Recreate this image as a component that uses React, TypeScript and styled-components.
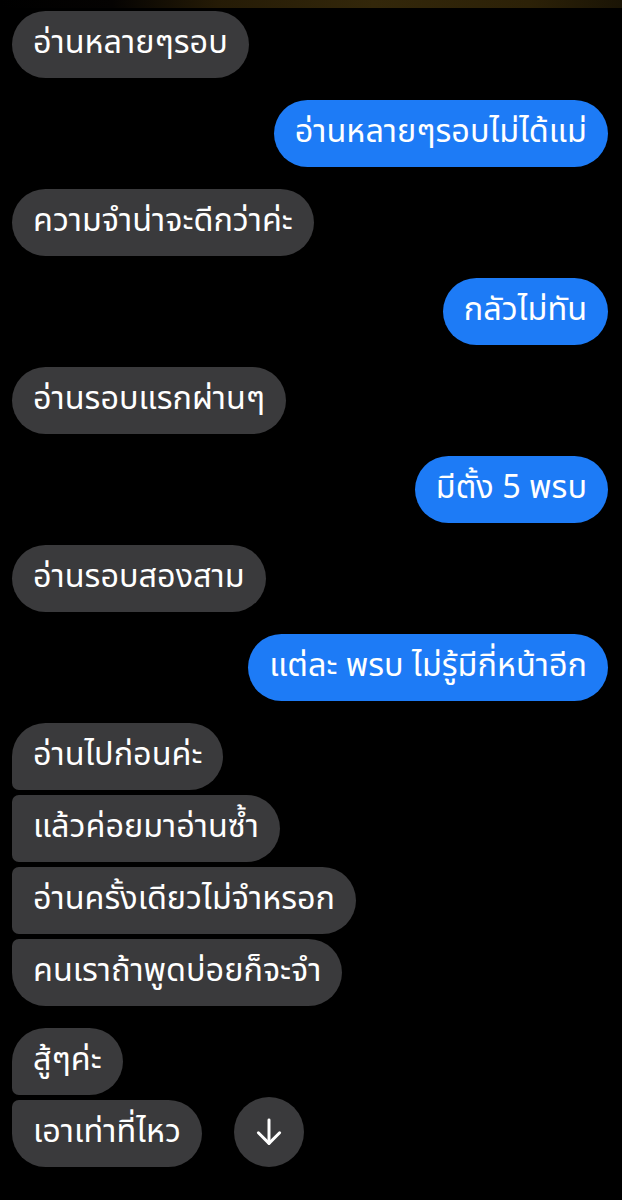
import React from "react";
import styled, { createGlobalStyle, css } from "styled-components";

const Global = createGlobalStyle`
  html, body { margin: 0; padding: 0; background: #000; }
  body { font-family: "Noto Sans Thai", "Noto Sans", "DejaVu Sans", sans-serif; }
`;

const Page = styled.div`
  width: 622px;
  min-height: 1200px;
  background: #000;
  overflow: hidden;
`;

const TopGlow = styled.div`
  height: 8px;
  background: linear-gradient(
    90deg,
    #000 0%,
    #050302 18%,
    #251b06 35%,
    #33270a 60%,
    #2c2107 85%,
    #1a1405 100%
  );
`;

const Thread = styled.div`
  display: flex;
  flex-direction: column;
  gap: 22px;
  padding: 3px 14px 0 12px;
`;

const Group = styled.div<{ $mine?: boolean }>`
  display: flex;
  flex-direction: column;
  gap: 5px;
  align-items: ${(p) => (p.$mine ? "flex-end" : "flex-start")};
`;

type Pos = "single" | "first" | "middle" | "last";

const Bubble = styled.div<{ $mine?: boolean; $pos?: Pos }>`
  height: 67px;
  box-sizing: border-box;
  display: flex;
  align-items: center;
  padding: 0 21px;
  border-radius: 34px;
  font-size: 32.4px;
  line-height: 1;
  color: #fff;
  white-space: nowrap;
  background: ${(p) => (p.$mine ? "#1d7bf6" : "#3a3a3c")};
  ${(p) =>
    p.$pos === "first" &&
    css`
      border-bottom-left-radius: 7px;
    `}
  ${(p) =>
    p.$pos === "middle" &&
    css`
      border-top-left-radius: 7px;
      border-bottom-left-radius: 7px;
    `}
  ${(p) =>
    p.$pos === "last" &&
    css`
      border-top-left-radius: 7px;
    `}
`;

const Row = styled.div`
  display: flex;
  align-items: center;
  gap: 32px;
`;

const ScrollButton = styled.button`
  width: 70px;
  height: 70px;
  border-radius: 50%;
  border: none;
  background: #3a3a3c;
  display: flex;
  align-items: center;
  justify-content: center;
  padding: 0;
  margin-top: -4px;
`;

const ArrowDown = () => (
  <svg width="34" height="34" viewBox="0 0 24 24" fill="none" stroke="#fff" strokeWidth="2.1" strokeLinecap="round" strokeLinejoin="round">
    <path d="M12 3.5v16.5" />
    <path d="M4.5 12.5l7.5 7.5 7.5-7.5" />
  </svg>
);

export default function App() {
  return (
    <Page>
      <Global />
      <TopGlow />
      <Thread>
        <Group>
          <Bubble>อ่านหลายๆรอบ</Bubble>
        </Group>
        <Group $mine>
          <Bubble $mine>อ่านหลายๆรอบไม่ได้แม่</Bubble>
        </Group>
        <Group>
          <Bubble>ความจำน่าจะดีกว่าค่ะ</Bubble>
        </Group>
        <Group $mine>
          <Bubble $mine>กลัวไม่ทัน</Bubble>
        </Group>
        <Group>
          <Bubble>อ่านรอบแรกผ่านๆ</Bubble>
        </Group>
        <Group $mine>
          <Bubble $mine>มีตั้ง 5 พรบ</Bubble>
        </Group>
        <Group>
          <Bubble>อ่านรอบสองสาม</Bubble>
        </Group>
        <Group $mine>
          <Bubble $mine>แต่ละ พรบ ไม่รู้มีกี่หน้าอีก</Bubble>
        </Group>
        <Group>
          <Bubble $pos="first">อ่านไปก่อนค่ะ</Bubble>
          <Bubble $pos="middle">แล้วค่อยมาอ่านซ้ำ</Bubble>
          <Bubble $pos="middle">อ่านครั้งเดียวไม่จำหรอก</Bubble>
          <Bubble $pos="last">คนเราถ้าพูดบ่อยก็จะจำ</Bubble>
        </Group>
        <Group>
          <Bubble $pos="first">สู้ๆค่ะ</Bubble>
          <Row>
            <Bubble $pos="last">เอาเท่าที่ไหว</Bubble>
            <ScrollButton aria-label="scroll down">
              <ArrowDown />
            </ScrollButton>
          </Row>
        </Group>
      </Thread>
    </Page>
  );
}
